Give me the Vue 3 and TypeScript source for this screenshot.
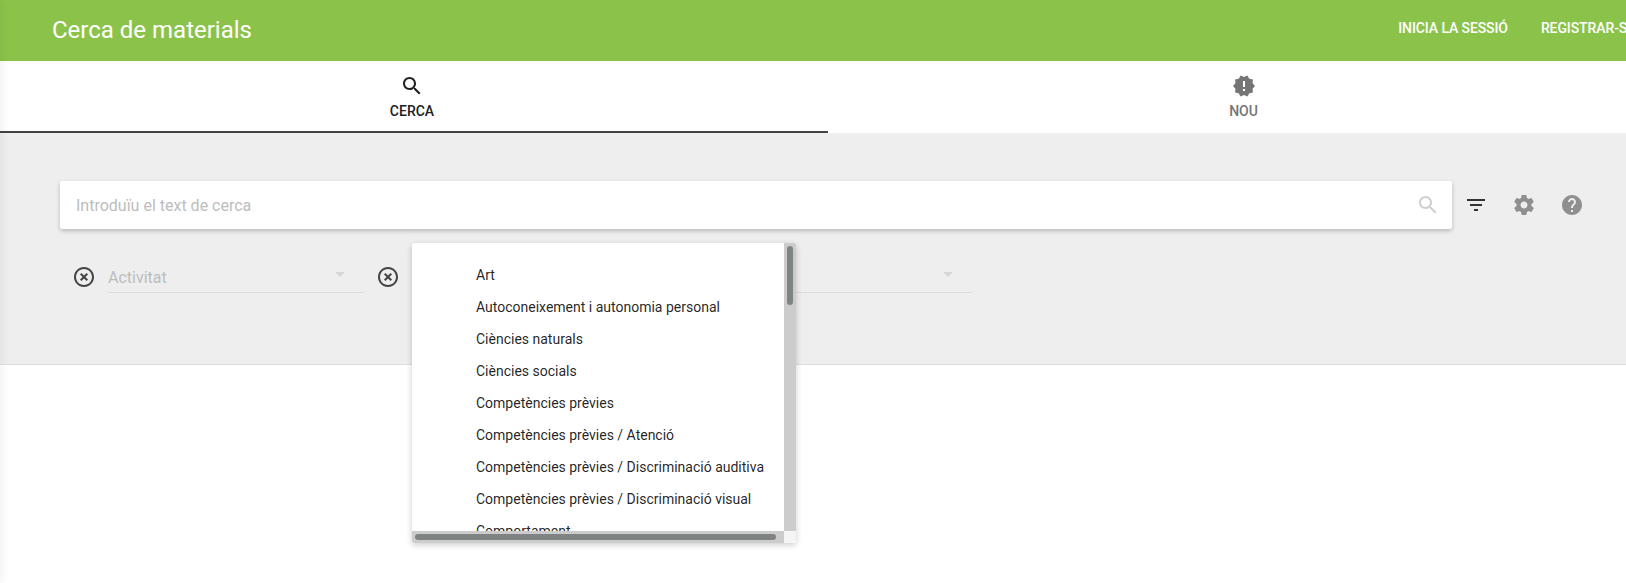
<template>
  <div class="page">
    <div class="edge-shadow"></div>
    <header class="toolbar">
      <span class="title">Cerca de materials</span>
      <nav class="toolbar-nav">
        <a class="toolbar-link">INICIA LA SESSIÓ</a>
        <a class="toolbar-link">REGISTRAR-SE</a>
      </nav>
    </header>

    <div class="tabs">
      <div v-for="tab in tabs" :key="tab.label" class="tab" :class="{ active: tab.active }">
        <svg class="icon" viewBox="0 0 24 24"><path :d="tab.icon" /></svg>
        <span class="tab-label">{{ tab.label }}</span>
      </div>
    </div>

    <section class="search-area">
      <div class="search-row">
        <div class="search-box">
          <input class="search-input" type="text" placeholder="Introduïu el text de cerca" />
          <svg class="icon search-icon" viewBox="0 0 24 24"><path :d="icons.search" /></svg>
        </div>
        <button type="button" class="icon-btn dark">
          <svg class="icon" viewBox="0 0 24 24"><path :d="icons.filter" /></svg>
        </button>
        <button type="button" class="icon-btn">
          <svg class="icon" viewBox="0 0 24 24"><path :d="icons.settings" /></svg>
        </button>
        <button type="button" class="icon-btn">
          <svg class="icon" viewBox="0 0 24 24"><path :d="icons.help" /></svg>
        </button>
      </div>

      <div class="filter-row">
        <div v-for="(filter, i) in filters" :key="i" class="filter">
          <svg class="icon clear-icon" viewBox="0 0 24 24"><path :d="icons.clear" /></svg>
          <div class="select">
            <span class="select-label">{{ filter }}</span>
            <span class="select-arrow"></span>
          </div>
        </div>
      </div>

      <div class="dropdown">
        <div class="option-list">
          <div v-for="option in options" :key="option" class="option">{{ option }}</div>
        </div>
        <div class="scroll-v"><div class="thumb-v"></div></div>
        <div class="scroll-h"><div class="thumb-h"></div></div>
        <div class="scroll-corner"></div>
      </div>
    </section>
  </div>
</template>

<script setup lang="ts">
const icons = {
  search:
    'M15.5 14h-.79l-.28-.27C15.41 12.59 16 11.11 16 9.5 16 5.91 13.09 3 9.5 3S3 5.91 3 9.5 5.91 16 9.5 16c1.61 0 3.09-.59 4.23-1.57l.27.28v.79l5 4.99L20.49 19l-4.99-5zm-6 0C7.01 14 5 11.99 5 9.5S7.01 5 9.5 5 14 7.01 14 9.5 11.99 14 9.5 14z',
  fresh:
    'M23 12l-2.44-2.78.34-3.68-3.61-.82-1.89-3.18L12 3 8.6 1.54 6.71 4.72l-3.61.81.34 3.68L1 12l2.44 2.78-.34 3.69 3.61.82 1.89 3.18L12 21l3.4 1.46 1.89-3.18 3.61-.82-.34-3.68L23 12zm-10 5h-2v-2h2v2zm0-4h-2V7h2v6z',
  filter: 'M10 18h4v-2h-4v2zM3 6v2h18V6H3zm3 7h12v-2H6v2z',
  settings:
    'M19.43 12.98c.04-.32.07-.64.07-.98s-.03-.66-.07-.98l2.11-1.65c.19-.15.24-.42.12-.64l-2-3.46c-.12-.22-.39-.3-.61-.22l-2.49 1c-.52-.4-1.08-.73-1.69-.98l-.38-2.65C14.46 2.18 14.25 2 14 2h-4c-.25 0-.46.18-.49.42l-.38 2.65c-.61.25-1.17.59-1.69.98l-2.49-1c-.23-.09-.49 0-.61.22l-2 3.46c-.13.22-.07.49.12.64l2.11 1.65c-.04.32-.07.65-.07.98s.03.66.07.98l-2.11 1.65c-.19.15-.24.42-.12.64l2 3.46c.12.22.39.3.61.22l2.49-1c.52.4 1.08.73 1.69.98l.38 2.65c.03.24.24.42.49.42h4c.25 0 .46-.18.49-.42l.38-2.65c.61-.25 1.17-.59 1.69-.98l2.49 1c.23.09.49 0 .61-.22l2-3.46c.12-.22.07-.49-.12-.64l-2.11-1.65zM12 15.5c-1.93 0-3.5-1.57-3.5-3.5s1.57-3.5 3.5-3.5 3.5 1.57 3.5 3.5-1.57 3.5-3.5 3.5z',
  help: 'M12 2C6.48 2 2 6.48 2 12s4.48 10 10 10 10-4.48 10-10S17.52 2 12 2zm1 17h-2v-2h2v2zm2.07-7.75l-.9.92C13.45 12.9 13 13.5 13 15h-2v-.5c0-1.1.45-2.1 1.17-2.83l1.24-1.26c.37-.36.59-.86.59-1.41 0-1.1-.9-2-2-2s-2 .9-2 2H8c0-2.21 1.79-4 4-4s4 1.79 4 4c0 .88-.36 1.68-.93 2.25z',
  clear:
    'M14.59 8L12 10.59 9.41 8 8 9.41 10.59 12 8 14.59 9.41 16 12 13.41 14.59 16 16 14.59 13.41 12 16 9.41 14.59 8zM12 2C6.47 2 2 6.47 2 12s4.47 10 10 10 10-4.47 10-10S17.53 2 12 2zm0 18c-4.41 0-8-3.59-8-8s3.59-8 8-8 8 3.59 8 8-3.59 8-8 8z',
};

const tabs = [
  { label: 'CERCA', icon: icons.search, active: true },
  { label: 'NOU', icon: icons.fresh, active: false },
];

const filters = ['Activitat', '', ''];

const options = [
  'Art',
  'Autoconeixement i autonomia personal',
  'Ciències naturals',
  'Ciències socials',
  'Competències prèvies',
  'Competències prèvies / Atenció',
  'Competències prèvies / Discriminació auditiva',
  'Competències prèvies / Discriminació visual',
  'Comportament',
];
</script>

<style>
html,
body {
  margin: 0;
  height: 100%;
  overflow: hidden;
  background: #fff;
}
</style>

<style scoped>
.page {
  position: relative;
  width: 1656px;
  height: 583px;
  font-family: Roboto, 'Liberation Sans', sans-serif;
  color: rgba(0, 0, 0, 0.87);
}

.edge-shadow {
  position: absolute;
  z-index: 5;
  left: -2px;
  top: 0;
  bottom: 0;
  width: 2px;
  box-shadow: 0 0 8px rgba(0, 0, 0, 0.2);
}

.toolbar {
  display: flex;
  align-items: center;
  justify-content: space-between;
  height: 61px;
  padding-left: 52px;
  box-sizing: border-box;
  background: #8bc34a;
  color: #fff;
}

.title {
  font-size: 24px;
  line-height: 61px;
}

.toolbar-nav {
  display: flex;
  gap: 33px;
  padding-right: 21px;
  margin-top: -6px;
}

.toolbar-link {
  font-size: 14px;
  font-weight: 500;
  letter-spacing: -0.1px;
  white-space: nowrap;
}

.tabs {
  display: grid;
  grid-template-columns: 828px 828px;
  height: 72px;
}

.tab {
  display: flex;
  flex-direction: column;
  align-items: center;
  box-sizing: border-box;
  padding: 13px 0 0 3px;
  color: #757575;
  fill: #757575;
}

.tab.active {
  padding: 13px 4px 0 0;
  color: #212121;
  fill: #212121;
  border-bottom: 2px solid #444;
}

.tab-label {
  font-size: 14px;
  font-weight: 500;
  line-height: 16px;
  margin-top: 5px;
}

.icon {
  display: block;
  width: 24px;
  height: 24px;
}

.search-area {
  position: relative;
  height: 232px;
  box-sizing: border-box;
  padding-top: 48px;
  background: #eee;
  border-bottom: 1px solid #ddd;
}

.search-row {
  display: flex;
  align-items: center;
  padding-left: 60px;
}

.search-box {
  display: flex;
  align-items: center;
  width: 1392px;
  height: 48px;
  box-sizing: border-box;
  padding: 0 12px 0 16px;
  background: #fff;
  border-radius: 2px;
  box-shadow: 0 2px 4px rgba(0, 0, 0, 0.22);
}

.search-input {
  flex: 1;
  min-width: 0;
  border: 0;
  outline: 0;
  padding: 0;
  font: inherit;
  font-size: 16px;
  background: transparent;
}

.search-input::placeholder {
  color: #bdbdbd;
  opacity: 1;
}

.search-icon {
  fill: #cfcfcf;
}

.icon-btn {
  width: 48px;
  height: 48px;
  padding: 12px;
  border: 0;
  background: none;
  fill: #8f8f8f;
}

.icon-btn.dark {
  fill: #333;
}

.filter-row {
  display: flex;
  gap: 12px;
  padding: 32px 0 0 72px;
}

.filter {
  display: flex;
  gap: 12px;
}

.clear-icon {
  margin-top: 4px;
  fill: #444;
}

.select {
  position: relative;
  width: 256px;
  height: 32px;
  box-sizing: border-box;
  border-bottom: 1px solid #ddd;
}

.select-label {
  font-size: 16px;
  line-height: 34px;
  color: #bdbdbd;
}

.select-arrow {
  position: absolute;
  right: 19px;
  top: 11px;
  border-left: 5px solid transparent;
  border-right: 5px solid transparent;
  border-top: 5px solid #d6d6d6;
}

.dropdown {
  position: absolute;
  z-index: 3;
  left: 412px;
  top: 110px;
  width: 384px;
  height: 300px;
  overflow: hidden;
  background: #fff;
  border-radius: 2px;
  box-shadow: 0 2px 6px rgba(0, 0, 0, 0.2);
}

.option-list {
  padding: 16px 0;
}

.option {
  height: 32px;
  padding-left: 64px;
  font-size: 14px;
  line-height: 32px;
  white-space: nowrap;
}

.scroll-v {
  position: absolute;
  right: 0;
  top: 0;
  bottom: 12px;
  width: 12px;
  background: #ccc;
}

.thumb-v {
  width: 6px;
  height: 59px;
  margin: 3px;
  border-radius: 3px;
  background: #7f8383;
}

.scroll-h {
  position: absolute;
  left: 0;
  right: 12px;
  bottom: 0;
  height: 12px;
  background: #ccc;
}

.thumb-h {
  width: 361px;
  height: 6px;
  margin: 3px;
  border-radius: 3px;
  background: #7f8383;
}

.scroll-corner {
  position: absolute;
  right: 0;
  bottom: 0;
  width: 12px;
  height: 12px;
  background: #f5f5f5;
}
</style>
